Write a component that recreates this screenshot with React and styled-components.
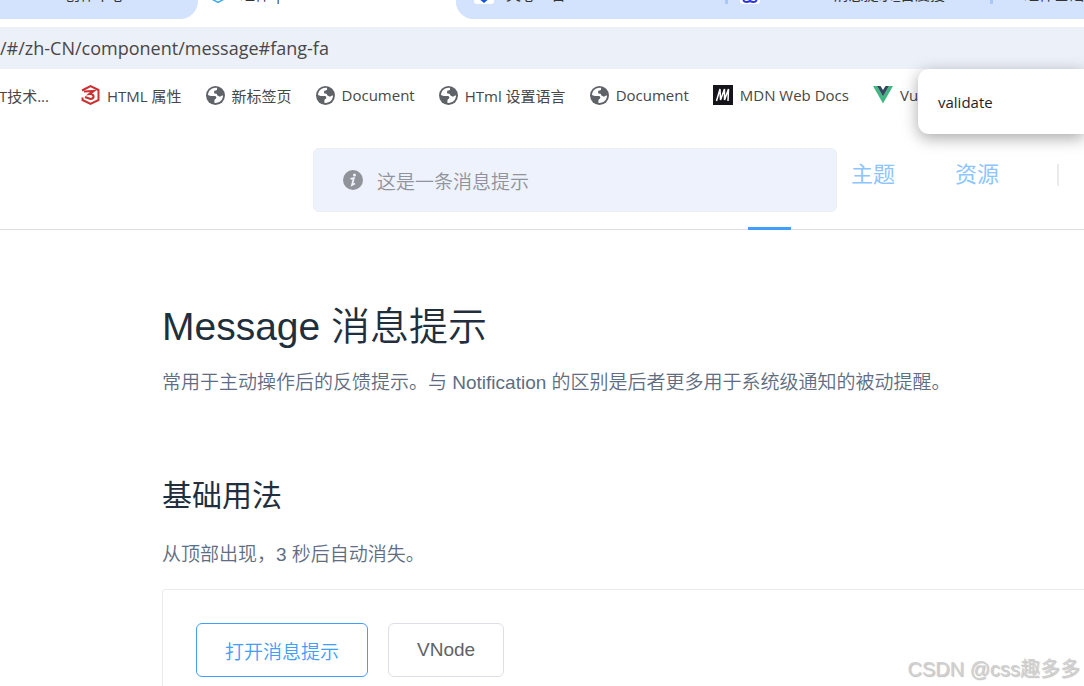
import React from "react";
import styled, { createGlobalStyle } from "styled-components";

const uiFont = `"Open Sans", "Noto Sans CJK SC", sans-serif`;
const docFont = `"Liberation Sans", "Noto Sans CJK SC", sans-serif`;

const GlobalStyle = createGlobalStyle`
    * {
        box-sizing: border-box;
    }
    body {
        margin: 0;
        background-color: #fff;
    }
    a {
        color: inherit;
        text-decoration: none;
    }
`;

const Wrapper = styled.div`
    position: relative;
    min-height: 100vh;
    overflow: hidden;
    font-family: ${docFont};
    font-weight: 350;
`;

// browser bars
const TabBar = styled.div`
    height: 27px;
    padding-bottom: 8px;
    display: flex;
    align-items: flex-end;
    background-color: #fff;
    font-family: ${uiFont};
    font-size: 15px;
    font-weight: 400;
    color: #333;
    overflow: hidden;
`;

const Tab = styled.div`
    flex: ${(props) => props.$width ? `0 0 ${props.$width}px` : "1 0 0"};
    height: 52px;
    padding-left: ${(props) => props.$indent || 12}px;
    display: flex;
    align-items: center;
    gap: 12px;
    white-space: nowrap;
    overflow: hidden;
    background-color: ${(props) => props.$active ? "#fff" : "#d3e2fd"};
    border-radius: ${(props) => props.$corner || "0"};
`;

const TabLine = styled.div`
    flex: none;
    width: 3px;
    height: 30px;
    margin-bottom: 15px;
    background-color: #a8c7fa;
`;

const TabGroup = styled.div`
    flex: 1;
    height: 52px;
    display: flex;
    align-items: flex-end;
    background-color: #d3e2fd;
    border-radius: 0 0 0 18px;
    overflow: hidden;
`;

const AddressBar = styled.div`
    height: 42px;
    display: flex;
    align-items: center;
    background-color: #ecf0f9;
    font-family: ${uiFont};
    font-size: 18px;
    font-weight: 400;
    color: #474747;
`;

const BookmarkBar = styled.nav`
    height: 52px;
    display: flex;
    align-items: center;
    gap: 24px;
    font-family: ${uiFont};
    font-size: 15px;
    font-weight: 400;
    color: #474747;
    white-space: nowrap;
    overflow: hidden;
`;

const Bookmark = styled.a`
    flex: none;
    display: flex;
    align-items: center;
    gap: 7px;
`;

const FirstBookmark = styled(Bookmark)`
    width: 57px;
    justify-content: flex-end;
    padding-right: 8px;
`;

const Suggestion = styled.div`
    position: absolute;
    top: 69px;
    right: 0;
    width: 166px;
    height: 65px;
    padding-left: 20px;
    display: flex;
    align-items: center;
    background-color: #fff;
    border-radius: 11px 0 0 11px;
    box-shadow: 0 4px 16px rgba(0, 0, 0, 0.35);
    font-family: ${uiFont};
    font-size: 15px;
    font-weight: 400;
    color: #1f1f1f;
    z-index: 20;
`;

// site header
const Header = styled.header`
    height: 109px;
    padding-right: 25px;
    display: flex;
    justify-content: flex-end;
    gap: 60px;
    border-bottom: 1px solid #dcdfe6;
`;

const NavLink = styled.a`
    min-width: 43px;
    height: 109px;
    line-height: 108px;
    font-size: 22px;
    font-weight: 400;
    color: #8cc5ff;
    border-bottom: 3px solid ${(props) => props.$active ? "#409eff" : "transparent"};
`;

const NavDivider = styled.div`
    width: 2px;
    height: 22px;
    margin: 43px 0 0 -2px;
    background-color: #ebebeb;
`;

const Message = styled.div`
    position: absolute;
    top: 148px;
    left: 313px;
    width: 524px;
    height: 64px;
    padding-left: 29px;
    display: flex;
    align-items: center;
    gap: 14px;
    background-color: #edf2fc;
    border: 1px solid #ebeef5;
    border-radius: 6px;
    font-size: 19px;
    color: #909399;
    z-index: 10;
`;

// document
const Content = styled.main`
    padding: 70px 0 0 162px;
    color: #5e6d82;
`;

const Title = styled.h1`
    margin: 0;
    line-height: 54px;
    font-size: 39px;
    font-weight: 350;
    color: #1f2f3d;
`;

const SubTitle = styled.h3`
    margin: 72px 0 0;
    line-height: 54px;
    font-size: 30px;
    font-weight: 400;
    color: #1f2f3d;
`;

const Text = styled.p`
    margin: ${(props) => props.$top}px 0 0;
    line-height: 28px;
    font-size: 19px;
    white-space: nowrap;
`;

const Demo = styled.section`
    margin-top: 20px;
    padding: 33px 33px 9px;
    display: flex;
    align-items: flex-start;
    gap: 20px;
    border: solid #ebebeb;
    border-width: 1px 0 0 1px;
    border-radius: 4px 0 0 0;
`;

const Button = styled.button`
    height: 54px;
    padding: 0 28px;
    background-color: #fff;
    border: 1px solid ${(props) => props.$primary ? "#409eff" : "#dcdfe6"};
    border-radius: 6px;
    font-family: inherit;
    font-size: 19px;
    font-weight: inherit;
    color: ${(props) => props.$primary ? "#409eff" : "#606266"};
    cursor: pointer;
`;

const Watermark = styled.div`
    position: absolute;
    right: 4px;
    bottom: 2px;
    line-height: 30px;
    font-size: 20px;
    color: #d0d0d0;
    text-shadow: 1px 1px 1px #c0c0c0;
`;

const GlobeIcon = () => (
    <svg width="19" height="19" viewBox="0 0 24 24">
        <circle cx="12" cy="12" r="12" fill="#5f6368" />
        <path d="M14 2.500 C8 1.500 3 5.500 2.500 11.500 L6 12.500 L11.500 12.500 C13.500 13 13.500 15 12 16 L10.500 17 L10.500 21.300 C17 22 21.500 17.500 21.500 12 L19 11 L16 11.500 L14.500 9.500 L11 9.500 C9.500 8 10.500 6.500 12.500 6 L14 5Z" fill="#fff" />
        <path d="M14.500 2.500 C19 4 21.500 8 21.500 11.500 L17.500 13.500 L14.500 12 L13 9 L10.500 9 L10.500 6 L14 5.500Z" fill="#5f6368" />
        <path d="M2.500 12.500 L10.500 12.500 L13 15 L10.500 17.500 L10 21.500 C5 20.500 2.500 17 2.500 12.500Z" fill="#5f6368" />
    </svg>
);

const Html3Icon = () => (
    <svg width="19" height="20" viewBox="0 0 19 20" fill="none" stroke="#c9302f">
        <path d="M1 5.500 L9.500 1.200 L17.500 5 L17.500 15 L9.500 18.800 L1.500 15 L1.500 12.500" strokeWidth="2" />
        <path d="M3 6.500 L12.500 6 L8.500 9 C14 8.500 13.500 14 9.500 14 L4 12" strokeWidth="2.200" />
    </svg>
);

const MdnIcon = () => (
    <svg width="20" height="20" viewBox="0 0 20 20">
        <rect width="20" height="20" fill="#15141a" />
        <path d="M3.500 16 L7 4 L7.500 15 L11.500 4 L11.500 15 L15.500 4 L15 16" fill="none" stroke="#fff" strokeWidth="1.500" />
    </svg>
);

const VueIcon = () => (
    <svg width="20" height="18" viewBox="0 0 20 18">
        <path d="M0 0 L4 0 L10 10.500 L16 0 L20 0 L10 17.500Z" fill="#41b883" />
        <path d="M4 0 L7.500 0 L10 4 L12.500 0 L16 0 L10 10.500Z" fill="#35495e" />
    </svg>
);

const ElementIcon = () => (
    <svg width="20" height="22" viewBox="0 0 20 22" fill="none" stroke="#39a9ed" strokeWidth="1.500">
        <path d="M10 1 L18 5 L18 16 L10 20.500 L2 16 L2 5Z M5 13.500 L10 16.500 L15 13.500" />
    </svg>
);

const BlueIcon = () => (
    <svg width="20" height="22" viewBox="0 0 20 22">
        <rect width="20" height="22" rx="3" fill="#fff" />
        <path d="M10 2 L16 7 L16 16 L10 21 L4 16 L4 7Z" fill="#1456d9" />
    </svg>
);

const BaiduIcon = () => (
    <svg width="20" height="22" viewBox="0 0 20 22">
        <rect width="20" height="22" rx="3" fill="#fff" />
        <path d="M10 9 L16 15 C18 20 14 21 10 19 C6 21 2 20 4 15Z" fill="none" stroke="#2932e1" strokeWidth="2" />
    </svg>
);

const InfoIcon = () => (
    <svg width="20" height="20" viewBox="0 0 20 20">
        <circle cx="10" cy="10" r="10" fill="#909399" />
        <circle cx="11.500" cy="5" r="1.500" fill="#edf2fc" />
        <path d="M7.500 8.800 L10.800 8.200 L9 15 L12 13.500" fill="none" stroke="#edf2fc" strokeWidth="1.800" />
    </svg>
);

const bookmarks = [
    { name: "HTML 属性", icon: <Html3Icon /> },
    { name: "新标签页", icon: <GlobeIcon /> },
    { name: "Document", icon: <GlobeIcon /> },
    { name: "HTml 设置语言", icon: <GlobeIcon /> },
    { name: "Document", icon: <GlobeIcon /> },
    { name: "MDN Web Docs", icon: <MdnIcon /> },
    { name: "Vu", icon: <VueIcon /> },
];

function App() {
    return (
        <Wrapper>
            <GlobalStyle />
            <TabBar>
                <Tab $width={198} $indent={65} $corner="0 0 18px 0">创作中心</Tab>
                <Tab $width={258} $indent={10} $active><ElementIcon />组件 |</Tab>
                <TabGroup>
                    <Tab $width={269} $indent={18}><BlueIcon />文心一言</Tab>
                    <TabLine />
                    <Tab $width={262}><BaiduIcon />element 消息提示_百度搜</Tab>
                    <TabLine />
                    <Tab><VueIcon />组件基础</Tab>
                </TabGroup>
            </TabBar>
            <AddressBar>/#/zh-CN/component/message#fang-fa</AddressBar>
            <BookmarkBar>
                <FirstBookmark href="#">IT技术...</FirstBookmark>
                {bookmarks.map((item, index) => (
                    <Bookmark href="#" key={index}>{item.icon}{item.name}</Bookmark>
                ))}
            </BookmarkBar>
            <Suggestion>validate</Suggestion>

            <Header>
                <NavLink href="#" $active aria-label="组件" />
                <NavLink href="#">主题</NavLink>
                <NavLink href="#">资源</NavLink>
                <NavDivider />
            </Header>
            <Message role="alert"><InfoIcon />这是一条消息提示</Message>

            <Content>
                <Title>Message 消息提示</Title>
                <Text $top={15}>常用于主动操作后的反馈提示。与 Notification 的区别是后者更多用于系统级通知的被动提醒。</Text>
                <SubTitle>基础用法</SubTitle>
                <Text $top={18}>从顶部出现，3 秒后自动消失。</Text>
                <Demo>
                    <Button $primary>打开消息提示</Button>
                    <Button>VNode</Button>
                </Demo>
            </Content>
            <Watermark>CSDN @css趣多多</Watermark>
        </Wrapper>
    );
}

export default App;
